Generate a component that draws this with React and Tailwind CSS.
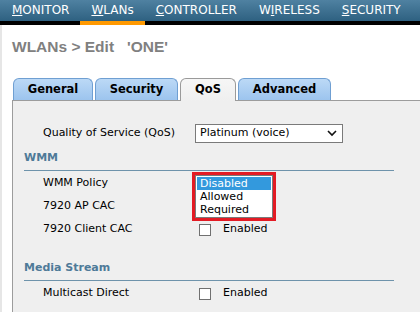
import { useState } from 'react';

const navItems = [
    { pre: '', key: 'M', rest: 'ONITOR' },
    { pre: '', key: 'W', rest: 'LANs', active: true },
    { pre: '', key: 'C', rest: 'ONTROLLER' },
    { pre: 'W', key: 'I', rest: 'RELESS' },
    { pre: '', key: 'S', rest: 'ECURITY' },
];

const tabs = [
    { label: 'General', w: 'w-[80px]' },
    { label: 'Security', w: 'w-[83px]' },
    { label: 'QoS', w: 'w-[56px]', active: true },
    { label: 'Advanced', w: 'w-[93px]' },
];

function Checkbox() {
    return (
        <div className="ml-[4px] flex items-center gap-[12px]">
            <span className="h-[12px] w-[12px] border border-[#707070] bg-white" />
            <span>Enabled</span>
        </div>
    );
}

function Row({ label, children }) {
    return (
        <div className="relative flex h-[23px] items-center">
            <div className="w-[182px] pl-[30px]">{label}</div>
            {children}
        </div>
    );
}

function Heading({ children, className }) {
    return (
        <div
            className={`ml-[11px] w-[370px] border-b border-[#6e93ab] pb-[6px] text-[11px] leading-[13px] font-bold text-[#4e7a98] ${className}`}
        >
            {children}
        </div>
    );
}

export default function App() {
    const [policy] = useState('Disabled');

    return (
        <div className="flex h-[312px] w-[420px] flex-col overflow-hidden bg-white font-['DejaVu_Sans',sans-serif] text-[11px] text-black">
            {/* Top menu */}
            <div className="flex h-[25px] shrink-0 bg-[linear-gradient(to_bottom,#4f81a1_0,#2e6181_21px,#000_21px,#000_100%)] pl-[1px] text-[12px] leading-[21px] text-white">
                {navItems.map((item) => (
                    <div
                        key={item.key + item.rest}
                        className={`h-[25px] px-[11px] ${item.active ? 'border-b-4 border-[#ff9900]' : ''}`}
                    >
                        {item.pre}
                        <span className="underline underline-offset-[1px]">{item.key}</span>
                        {item.rest}
                    </div>
                ))}
            </div>

            <div className="flex flex-1">
                <div className="w-[2px] bg-[#e6e6e6]" />
                <div className="flex flex-1 flex-col pl-[10px]">
                    {/* Title */}
                    <div className="mt-[13px] font-['Liberation_Sans',Arial,sans-serif] text-[15.5px] leading-[17px] font-bold text-[#808080]">
                        WLANs &gt; Edit&nbsp;&nbsp; 'ONE'
                    </div>

                    {/* Tabs */}
                    <div className="mt-[23px] flex h-[22px] items-start gap-[2px] pl-[1px] text-[11.5px] font-bold">
                        {tabs.map((t) =>
                            t.active ? (
                                <div
                                    key={t.label}
                                    className={`${t.w} relative z-10 h-[23px] rounded-t-[6px] border border-b-0 border-[#9a9a9a] bg-[linear-gradient(to_bottom,#f6f6f6,#efefef)] text-center leading-[21px]`}
                                >
                                    {t.label}
                                </div>
                            ) : (
                                <div
                                    key={t.label}
                                    className={`${t.w} h-[22px] rounded-t-[6px] border border-b-0 border-[#6f9fd2] bg-[linear-gradient(to_bottom,#bcd9f6,#9cc4ee)] text-center leading-[21px]`}
                                >
                                    {t.label}
                                </div>
                            )
                        )}
                    </div>

                    {/* Panel */}
                    <div className="flex-1 border-t border-l border-[#9c9c9c] bg-[#efefef]">
                        <div className="mt-[23px] flex h-[19px] items-center">
                            <div className="w-[182px] pl-[30px]">Quality of Service (QoS)</div>
                            <div className="flex h-[19px] w-[148px] items-center justify-between border border-[#7a7a7a] bg-white pr-[5px] pl-[4px]">
                                <span>Platinum (voice)</span>
                                <svg width="10" height="7" viewBox="0 0 10 7">
                                    <polyline points="1,1 5,5 9,1" fill="none" stroke="#111" strokeWidth="1.6" />
                                </svg>
                            </div>
                        </div>

                        <Heading className="mt-[8px]">WMM</Heading>

                        <div className="mt-[1px]">
                            <Row label="WMM Policy">
                                {/* open dropdown list */}
                                <div className="absolute top-0 left-[179px] z-10 h-[49px] w-[84px] border-[3px] border-[#e31b24]">
                                    <div className="h-full border border-[#7a7a7a] bg-white pt-[1px]">
                                        {['Disabled', 'Allowed', 'Required'].map((o) => (
                                            <div
                                                key={o}
                                                className={`mx-[1px] h-[13px] pl-[3px] leading-[13px] ${o === policy ? 'bg-[#3399dd] text-white' : ''}`}
                                            >
                                                {o}
                                            </div>
                                        ))}
                                    </div>
                                </div>
                            </Row>
                            <Row label="7920 AP CAC" />
                            <Row label="7920 Client CAC">
                                <Checkbox />
                            </Row>
                        </div>

                        <Heading className="mt-[20px] pb-[5px]">Media Stream</Heading>

                        <div className="mt-[1px]">
                            <Row label="Multicast Direct">
                                <Checkbox />
                            </Row>
                        </div>
                    </div>
                </div>
            </div>
        </div>
    );
}
